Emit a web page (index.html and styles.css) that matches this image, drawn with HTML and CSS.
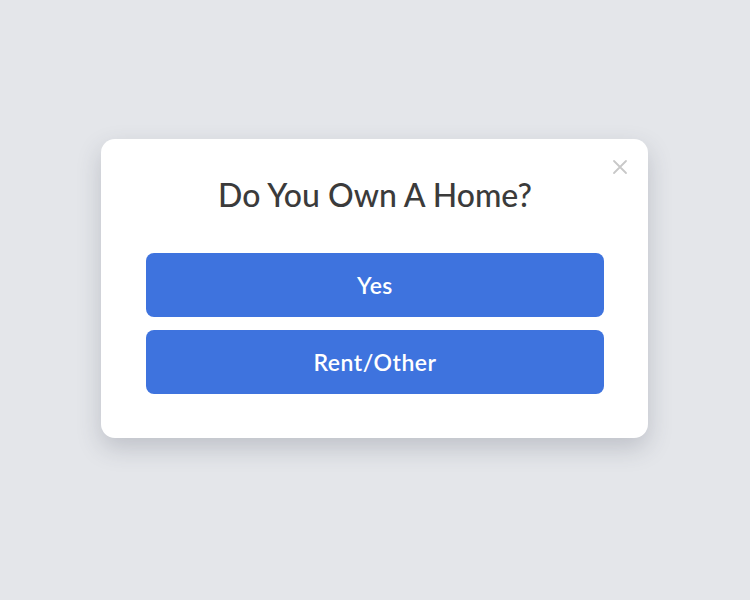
FILE: index.html
```html
<!DOCTYPE html>
<html lang="en">

<head>
    <meta charset="UTF-8" />
    <meta name="viewport" content="width=device-width, initial-scale=1.0" />
    <title>Do You Own A Home?</title>
    <link rel="stylesheet" href="styles.css">
</head>

<body>
    <div class="page">
        <!-- 问题弹窗 -->
        <div class="modal">
            <span class="close">
                <svg width="16" height="16" viewBox="0 0 16 16">
                    <path d="M2 2 L14 14 M14 2 L2 14" stroke="#c8c8c8" stroke-width="1.8" stroke-linecap="round" />
                </svg>
            </span>
            <h1 class="title">Do You Own A Home?</h1>
            <div class="options">
                <button class="btn">Yes</button>
                <button class="btn">Rent/Other</button>
            </div>
        </div>
    </div>
</body>

</html>
```

FILE: styles.css
```css
* {
    margin: 0;
    padding: 0;
    box-sizing: border-box;
}

body {
    background: #e4e6ea;
    font-family: Lato, "Liberation Sans", sans-serif;
}

.page {
    height: 600px;
    display: flex;
    justify-content: center;
    padding-top: 139px;
}

.modal {
    position: relative;
    width: 547px;
    height: 299px;
    margin-left: -1px;
    padding: 37px 44px 45px 45px;
    background: #fff;
    border-radius: 14px;
    box-shadow: 0 10px 24px rgba(60, 64, 80, 0.22);
}

.close {
    position: absolute;
    top: 20px;
    right: 20px;
    width: 16px;
    height: 16px;
    cursor: pointer;
}

.close svg {
    display: block;
}

.title {
    font-size: 32px;
    font-weight: 500;
    color: #3b3b3b;
    text-align: center;
    line-height: 1.2;
    margin-bottom: 39px;
}

.options {
    display: flex;
    flex-direction: column;
    gap: 13px;
}

.btn {
    height: 64px;
    border: none;
    outline: none;
    border-radius: 8px;
    background: #3e73de;
    color: #fff;
    font: 600 23px Lato, "Liberation Sans", sans-serif;
    letter-spacing: 0.5px;
    cursor: pointer;
}
```
